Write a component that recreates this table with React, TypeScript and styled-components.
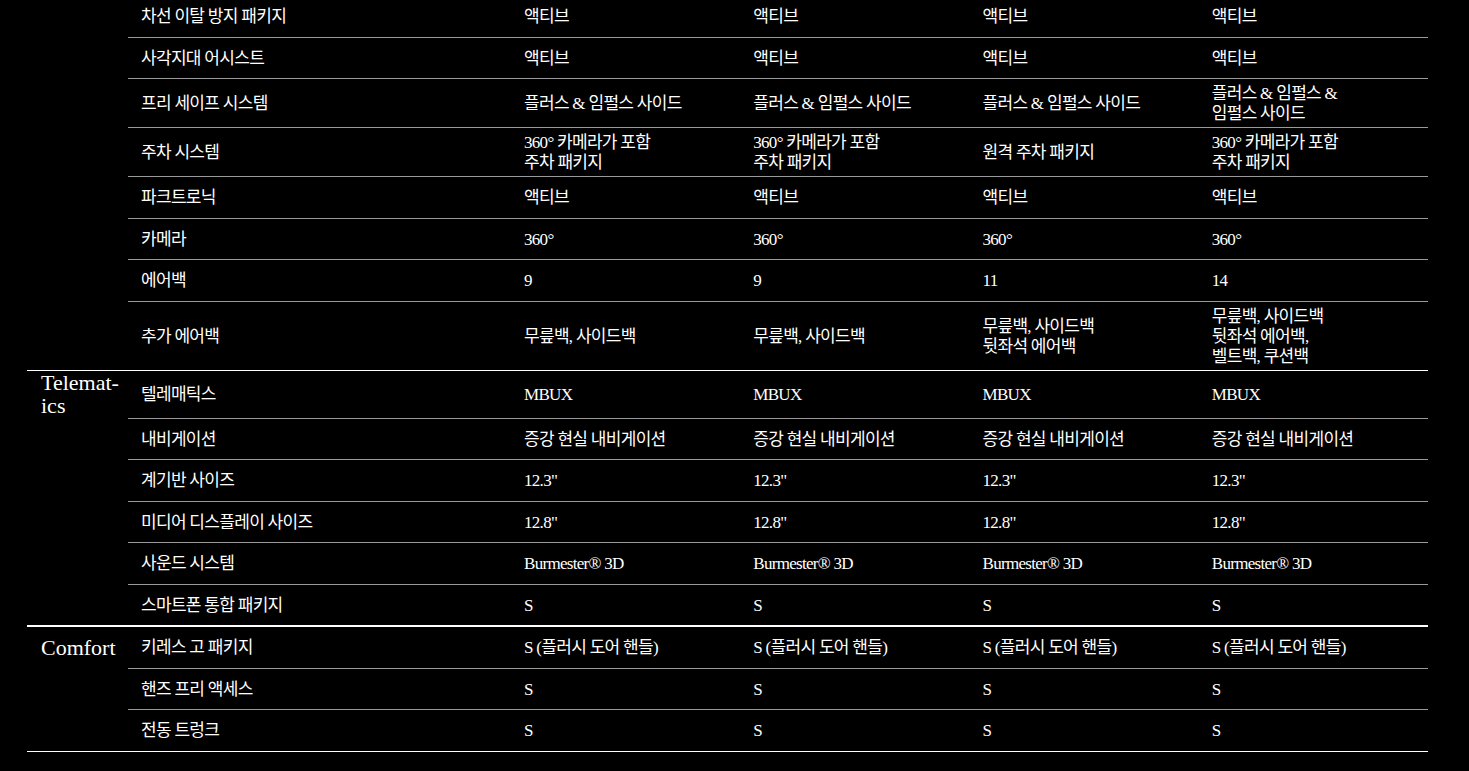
import React from "react"
import { styled, createGlobalStyle } from "styled-components"

type Cell = string | string[]

type SpecRow = {
   label: string,
   values: Cell[]
}

type SpecGroup = {
   title: string,
   rows: SpecRow[]
}

const all = (v: Cell): Cell[] => [v, v, v, v]

const groups: SpecGroup[] = [
   {
      title: "",
      rows: [
         { label: "차선 이탈 방지 패키지", values: all("액티브") },
         { label: "사각지대 어시스트", values: all("액티브") },
         {
            label: "프리 세이프 시스템",
            values: [
               "플러스 & 임펄스 사이드",
               "플러스 & 임펄스 사이드",
               "플러스 & 임펄스 사이드",
               ["플러스 & 임펄스 &", "임펄스 사이드"],
            ],
         },
         {
            label: "주차 시스템",
            values: [
               ["360° 카메라가 포함", "주차 패키지"],
               ["360° 카메라가 포함", "주차 패키지"],
               "원격 주차 패키지",
               ["360° 카메라가 포함", "주차 패키지"],
            ],
         },
         { label: "파크트로닉", values: all("액티브") },
         { label: "카메라", values: all("360°") },
         { label: "에어백", values: ["9", "9", "11", "14"] },
         {
            label: "추가 에어백",
            values: [
               "무릎백, 사이드백",
               "무릎백, 사이드백",
               ["무릎백, 사이드백", "뒷좌석 에어백"],
               ["무릎백, 사이드백", "뒷좌석 에어백,", "벨트백, 쿠션백"],
            ],
         },
      ],
   },
   {
      title: "Telematics",
      rows: [
         { label: "텔레매틱스", values: all("MBUX") },
         { label: "내비게이션", values: all("증강 현실 내비게이션") },
         { label: "계기반 사이즈", values: all("12.3\"") },
         { label: "미디어 디스플레이 사이즈", values: all("12.8\"") },
         { label: "사운드 시스템", values: all("Burmester® 3D") },
         { label: "스마트폰 통합 패키지", values: all("S") },
      ],
   },
   {
      title: "Comfort",
      rows: [
         { label: "키레스 고 패키지", values: all("S (플러시 도어 핸들)") },
         { label: "핸즈 프리 액세스", values: all("S") },
         { label: "전동 트렁크", values: all("S") },
      ],
   },
]

export default function App() {
   return (
      <>
         <GlobalStyle />
         <StyledPage>
            <StyledTable>
               {groups.map((group, gi) => (
                  <StyledGroup key={gi} $heavy={group.title === "Comfort"}>
                     {group.rows.map((row, ri) => (
                        <StyledRow key={ri}>
                           <StyledCategory lang="en">
                              {ri === 0 ? group.title.replace("Telematics", "Telemat\u00ADics") : null}
                           </StyledCategory>
                           <StyledRowBody $first={ri === 0}>
                              <StyledLabel>{row.label}</StyledLabel>
                              {row.values.map((value, vi) => (
                                 <StyledValue key={vi}>
                                    {Array.isArray(value)
                                       ? value.map((line, li) => <div key={li}>{line}</div>)
                                       : value}
                                 </StyledValue>
                              ))}
                           </StyledRowBody>
                        </StyledRow>
                     ))}
                  </StyledGroup>
               ))}
            </StyledTable>
         </StyledPage>
      </>
   )
}

const GlobalStyle = createGlobalStyle`
   html, body {
      margin: 0;
      padding: 0;
      background: #000;
      overflow: hidden;
   }
   body {
      color: #fff;
      font-family: "Liberation Serif", "Noto Sans CJK KR", serif;
   }
`

const StyledPage = styled.div`
   width: 1469px;
   height: 771px;
   background: #000;
   overflow: hidden;
`

const StyledTable = styled.div`
   width: 1401px;
   margin: -5px 0 0 27px;
   border-bottom: 1px solid #fff;
`

const StyledGroup = styled.div<{ $heavy: boolean }>`
   border-top: ${({ $heavy }) => ($heavy ? "2px" : "1px")} solid #fff;
`

const StyledRow = styled.div`
   display: grid;
   grid-template-columns: 101px 1fr;
`

const StyledCategory = styled.div`
   padding: 0 8px 0 14px;
   font-size: 22px;
   line-height: 23.5px;
   hyphens: manual;
   display: flex;
   align-items: center;
`

const StyledRowBody = styled.div<{ $first: boolean }>`
   display: grid;
   grid-template-columns: 383px repeat(4, 1fr);
   align-items: center;
   min-height: 40.5px;
   border-top: ${({ $first }) => ($first ? "none" : "1px solid #9a9a9a")};
`

const StyledLabel = styled.div`
   padding: 5px 13px 3px;
   font-size: 17px;
   line-height: 20px;
   letter-spacing: -0.7px;
`

const StyledValue = styled.div`
   padding: 5px 13px 3px;
   font-size: 17px;
   line-height: 20px;
   letter-spacing: -0.7px;
   white-space: nowrap;
`
